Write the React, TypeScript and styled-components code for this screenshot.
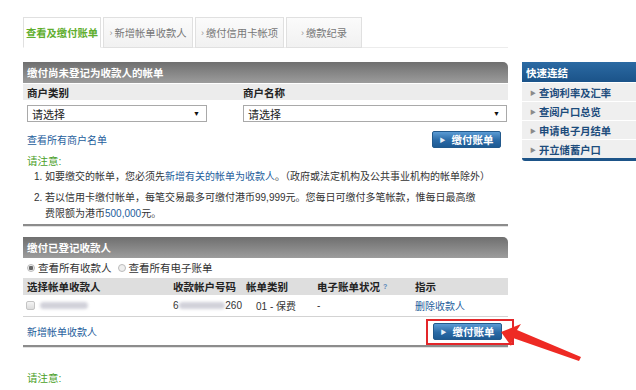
import React from 'react';
import styled, { createGlobalStyle } from 'styled-components';

const GlobalStyle = createGlobalStyle`
  html, body {
    margin: 0;
    padding: 0;
    background: #fff;
  }
  body {
    font-family: "Liberation Sans", "Noto Sans CJK SC", sans-serif;
    font-size: 10px;
    color: #333;
  }
`;

const Page = styled.div`
  position: relative;
  width: 636px;
  height: 390px;
  overflow: hidden;
  display: flex;
  gap: 14px;
  padding: 17px 0 0 23px;
  box-sizing: border-box;
`;

const MainColumn = styled.div`
  width: 485px;
  flex-shrink: 0;
`;

const TabBar = styled.div`
  display: flex;
  gap: 2px;
  height: 30px;
  border-bottom: 1px solid #ececec;
`;

const Tab = styled.div<{ $active?: boolean; $width: number }>`
  width: ${p => p.$width}px;
  box-sizing: border-box;
  height: 31px;
  display: flex;
  align-items: center;
  justify-content: center;
  border: 1px solid #e0e0e0;
  border-bottom: ${p => (p.$active ? '1px solid #fff' : '1px solid #e0e0e0')};
  background: ${p => (p.$active ? '#fff' : 'linear-gradient(#fbfbfb, #f1f1f1)')};
  color: ${p => (p.$active ? '#5fae2e' : '#777')};
  font-size: 10.3px;
  font-weight: ${p => (p.$active ? 'bold' : 'normal')};
  white-space: nowrap;
`;

const Chevron = styled.span`
  color: #999;
  margin-right: 2px;
  font-size: 9px;
`;

const SectionHeader = styled.div<{ $top: number }>`
  margin-top: ${p => p.$top}px;
  height: 21px;
  display: flex;
  align-items: center;
  padding-left: 4px;
  background: linear-gradient(#6f6f6f, #9c9c9c);
  border-top-right-radius: 5px;
  color: #fff;
  font-weight: bold;
  font-size: 10.5px;
`;

const LabelRow = styled.div`
  margin-top: 1px;
  height: 16px;
  background: #ececec;
  display: flex;
  align-items: center;
  font-weight: bold;
  font-size: 10.5px;
  color: #222;
`;

const LabelCell = styled.div<{ $width: number }>`
  width: ${p => p.$width}px;
  padding-left: 4px;
  box-sizing: border-box;
`;

const SelectRow = styled.div`
  display: flex;
  padding: 5px 1px 0 4px;
  gap: 36px;
`;

const SelectBox = styled.div<{ $width: number }>`
  width: ${p => p.$width}px;
  height: 17px;
  box-sizing: border-box;
  border: 1px solid #a9a9a9;
  display: flex;
  align-items: center;
  justify-content: space-between;
  padding: 0 6px 0 4px;
  font-size: 11px;
  color: #222;
`;

const Caret = styled.span`
  font-size: 7px;
  color: #111;
`;

const ActionRow = styled.div`
  height: 23px;
  margin-top: 6px;
  display: flex;
  align-items: center;
  justify-content: space-between;
  padding: 0 7px 0 4px;
`;

const Link = styled.a`
  color: #1d5d9b;
  text-decoration: none;
  font-size: 10px;
`;

const BlueButton = styled.div`
  width: 69px;
  height: 17px;
  box-sizing: border-box;
  border: 1px solid #22598c;
  border-radius: 2px;
  background: linear-gradient(#5b9bd4, #2a6aa6 55%, #1d5a93);
  color: #fff;
  font-weight: bold;
  font-size: 10.5px;
  display: flex;
  align-items: center;
  justify-content: center;
  gap: 6px;
`;

const SmallArrow = styled.span`
  font-size: 6px;
  color: #e8f0f8;
`;

const NoticeTitle = styled.div<{ $top: number }>`
  margin-top: ${p => p.$top}px;
  padding-left: 4px;
  color: #4ca12a;
  font-size: 10.5px;
  line-height: 14px;
`;

const NoticeList = styled.ol`
  margin: 1px 0 0;
  padding: 0 0 0 22px;
  font-size: 10px;
  line-height: 16px;
  color: #333;

  li + li {
    margin-top: 5px;
  }
`;

const Divider = styled.div<{ $top: number }>`
  margin-top: ${p => p.$top}px;
  height: 2px;
  background: #8c8c8c;
  border-bottom: 1px solid #e2e2e2;
`;

const RadioRow = styled.div`
  height: 19px;
  display: flex;
  align-items: center;
  padding-left: 4px;
  font-size: 10.5px;
`;

const RadioItem = styled.label`
  display: flex;
  align-items: center;
  gap: 3px;
  margin-right: 6px;
`;

const RadioDot = styled.span<{ $checked?: boolean }>`
  width: 8px;
  height: 8px;
  border-radius: 50%;
  box-sizing: border-box;
  border: 1px solid #bbb;
  background: ${p => (p.$checked ? 'radial-gradient(circle, #666 0 2px, #eee 2.5px)' : '#eee')};
`;

const TableGrid = styled.div<{ $head?: boolean }>`
  display: grid;
  grid-template-columns: 146px 73px 71px 98px 1fr;
  align-items: center;
  height: ${p => (p.$head ? 17 : 21)}px;
  background: ${p => (p.$head ? '#dedede' : '#fff')};
  font-weight: ${p => (p.$head ? 'bold' : 'normal')};
  font-size: ${p => (p.$head ? 10.5 : 10)}px;
  color: ${p => (p.$head ? '#222' : '#333')};
  margin-top: ${p => (p.$head ? 1 : 0)}px;
  border-bottom: ${p => (p.$head ? 'none' : '1px solid #d3d3d3')};
`;

const Cell = styled.div<{ $pad?: number }>`
  padding-left: ${p => p.$pad ?? 4}px;
  display: flex;
  align-items: center;
  white-space: nowrap;
`;

const Help = styled.sup`
  color: #5a86b8;
  font-size: 7px;
  margin-left: 3px;
`;

const CheckBox = styled.span`
  width: 9px;
  height: 9px;
  box-sizing: border-box;
  border: 1px solid #c4c4c4;
  border-radius: 2px;
  background: linear-gradient(#f4f4f4, #dcdcdc);
  margin: 0 5px 0 3px;
`;

const Blurred = styled.span<{ $width: number }>`
  display: inline-block;
  width: ${p => p.$width}px;
  height: 7px;
  background: #c9c9d3;
  border-radius: 4px;
  filter: blur(1.5px);
  opacity: 0.85;
`;

const FooterRow = styled.div`
  position: relative;
  height: 28px;
  display: flex;
  align-items: center;
  justify-content: space-between;
  padding: 0 6px 0 4px;
`;

const Highlight = styled.div`
  position: absolute;
  left: 403px;
  top: 2px;
  width: 88px;
  height: 26px;
  box-sizing: border-box;
  border: 2px solid #e3262a;
`;

const Sidebar = styled.div`
  margin-top: 45px;
  width: 125px;
  flex-shrink: 0;
`;

const SidebarHeader = styled.div`
  height: 20px;
  background: linear-gradient(#2b6aa3, #1b5389);
  border-top-right-radius: 4px;
  color: #fff;
  font-weight: bold;
  font-size: 10.5px;
  display: flex;
  align-items: center;
  padding-left: 4px;
`;

const SidebarList = styled.div`
  background: #efefef;
  border-bottom: 3px solid #1d5488;
  border-bottom-left-radius: 3px;
`;

const SidebarItem = styled.div`
  height: 18px;
  display: flex;
  align-items: center;
  padding-left: 8px;
  gap: 3px;
  border-top: 1px solid #fff;
  color: #1d4c7c;
  font-weight: bold;
  font-size: 10.3px;
`;

const ItemArrow = styled.span`
  color: #8a8a8a;
  font-size: 6px;
`;

const Annotation = styled.svg`
  position: absolute;
  left: 0;
  top: 0;
  pointer-events: none;
`;

const tabs = [
  { label: '查看及缴付账单', width: 78, active: true },
  { label: '新增帐单收款人', width: 90 },
  { label: '缴付信用卡帐项', width: 89 },
  { label: '缴款纪录', width: 76 },
];

const quickLinks = ['查询利率及汇率', '查阅户口总览', '申请电子月结单', '开立储蓄户口'];

const PayButton = () => (
  <BlueButton>
    <SmallArrow>▶</SmallArrow>
    缴付账单
  </BlueButton>
);

export default function App() {
  return (
    <>
      <GlobalStyle />
      <Page>
        <MainColumn>
          <TabBar>
            {tabs.map(t => (
              <Tab key={t.label} $active={t.active} $width={t.width}>
                {!t.active && <Chevron>›</Chevron>}
                {t.label}
              </Tab>
            ))}
          </TabBar>

          <SectionHeader $top={14}>缴付尚未登记为收款人的帐单</SectionHeader>
          <LabelRow>
            <LabelCell $width={216}>商户类别</LabelCell>
            <LabelCell $width={200}>商户名称</LabelCell>
          </LabelRow>
          <SelectRow>
            <SelectBox $width={180}>
              请选择<Caret>▼</Caret>
            </SelectBox>
            <SelectBox $width={264}>
              请选择<Caret>▼</Caret>
            </SelectBox>
          </SelectRow>
          <ActionRow>
            <Link>查看所有商户名单</Link>
            <PayButton />
          </ActionRow>

          <NoticeTitle $top={3}>请注意:</NoticeTitle>
          <NoticeList>
            <li>
              如要缴交的帐单，您必须先<Link>新增有关的帐单为收款人</Link>。（政府或法定机构及公共事业机构的帐单除外）
            </li>
            <li>
              若以信用卡缴付帐单，每笔交易最多可缴付港币99,999元。您每日可缴付多笔帐款，惟每日最高缴
              <br />
              费限额为港币<Link>500,000</Link>元。
            </li>
          </NoticeList>
          <Divider $top={2} />

          <SectionHeader $top={10}>缴付已登记收款人</SectionHeader>
          <RadioRow>
            <RadioItem>
              <RadioDot $checked />
              查看所有收款人
            </RadioItem>
            <RadioItem>
              <RadioDot />
              查看所有电子账单
            </RadioItem>
          </RadioRow>
          <TableGrid $head>
            <Cell>选择帐单收款人</Cell>
            <Cell>收款帐户号码</Cell>
            <Cell>帐单类别</Cell>
            <Cell>
              电子账单状况<Help>?</Help>
            </Cell>
            <Cell>指示</Cell>
          </TableGrid>
          <TableGrid>
            <Cell $pad={0}>
              <CheckBox />
              <Blurred $width={48} />
            </Cell>
            <Cell>
              6<Blurred $width={52} />
              260
            </Cell>
            <Cell $pad={14}>01 - 保费</Cell>
            <Cell>-</Cell>
            <Cell>
              <Link>删除收款人</Link>
            </Cell>
          </TableGrid>
          <FooterRow>
            <Link>新增帐单收款人</Link>
            <PayButton />
            <Highlight />
          </FooterRow>
          <Divider $top={0} />
          <NoticeTitle $top={23}>请注意:</NoticeTitle>
        </MainColumn>

        <Sidebar>
          <SidebarHeader>快速连结</SidebarHeader>
          <SidebarList>
            {quickLinks.map(l => (
              <SidebarItem key={l}>
                <ItemArrow>▶</ItemArrow>
                {l}
              </SidebarItem>
            ))}
          </SidebarList>
        </Sidebar>

        <Annotation width="636" height="390" viewBox="0 0 636 390">
          <polygon
            points="501,332 521,324 517,330 581,357 579,361 513,338 511,346"
            fill="#ee2a24"
          />
        </Annotation>
      </Page>
    </>
  );
}
